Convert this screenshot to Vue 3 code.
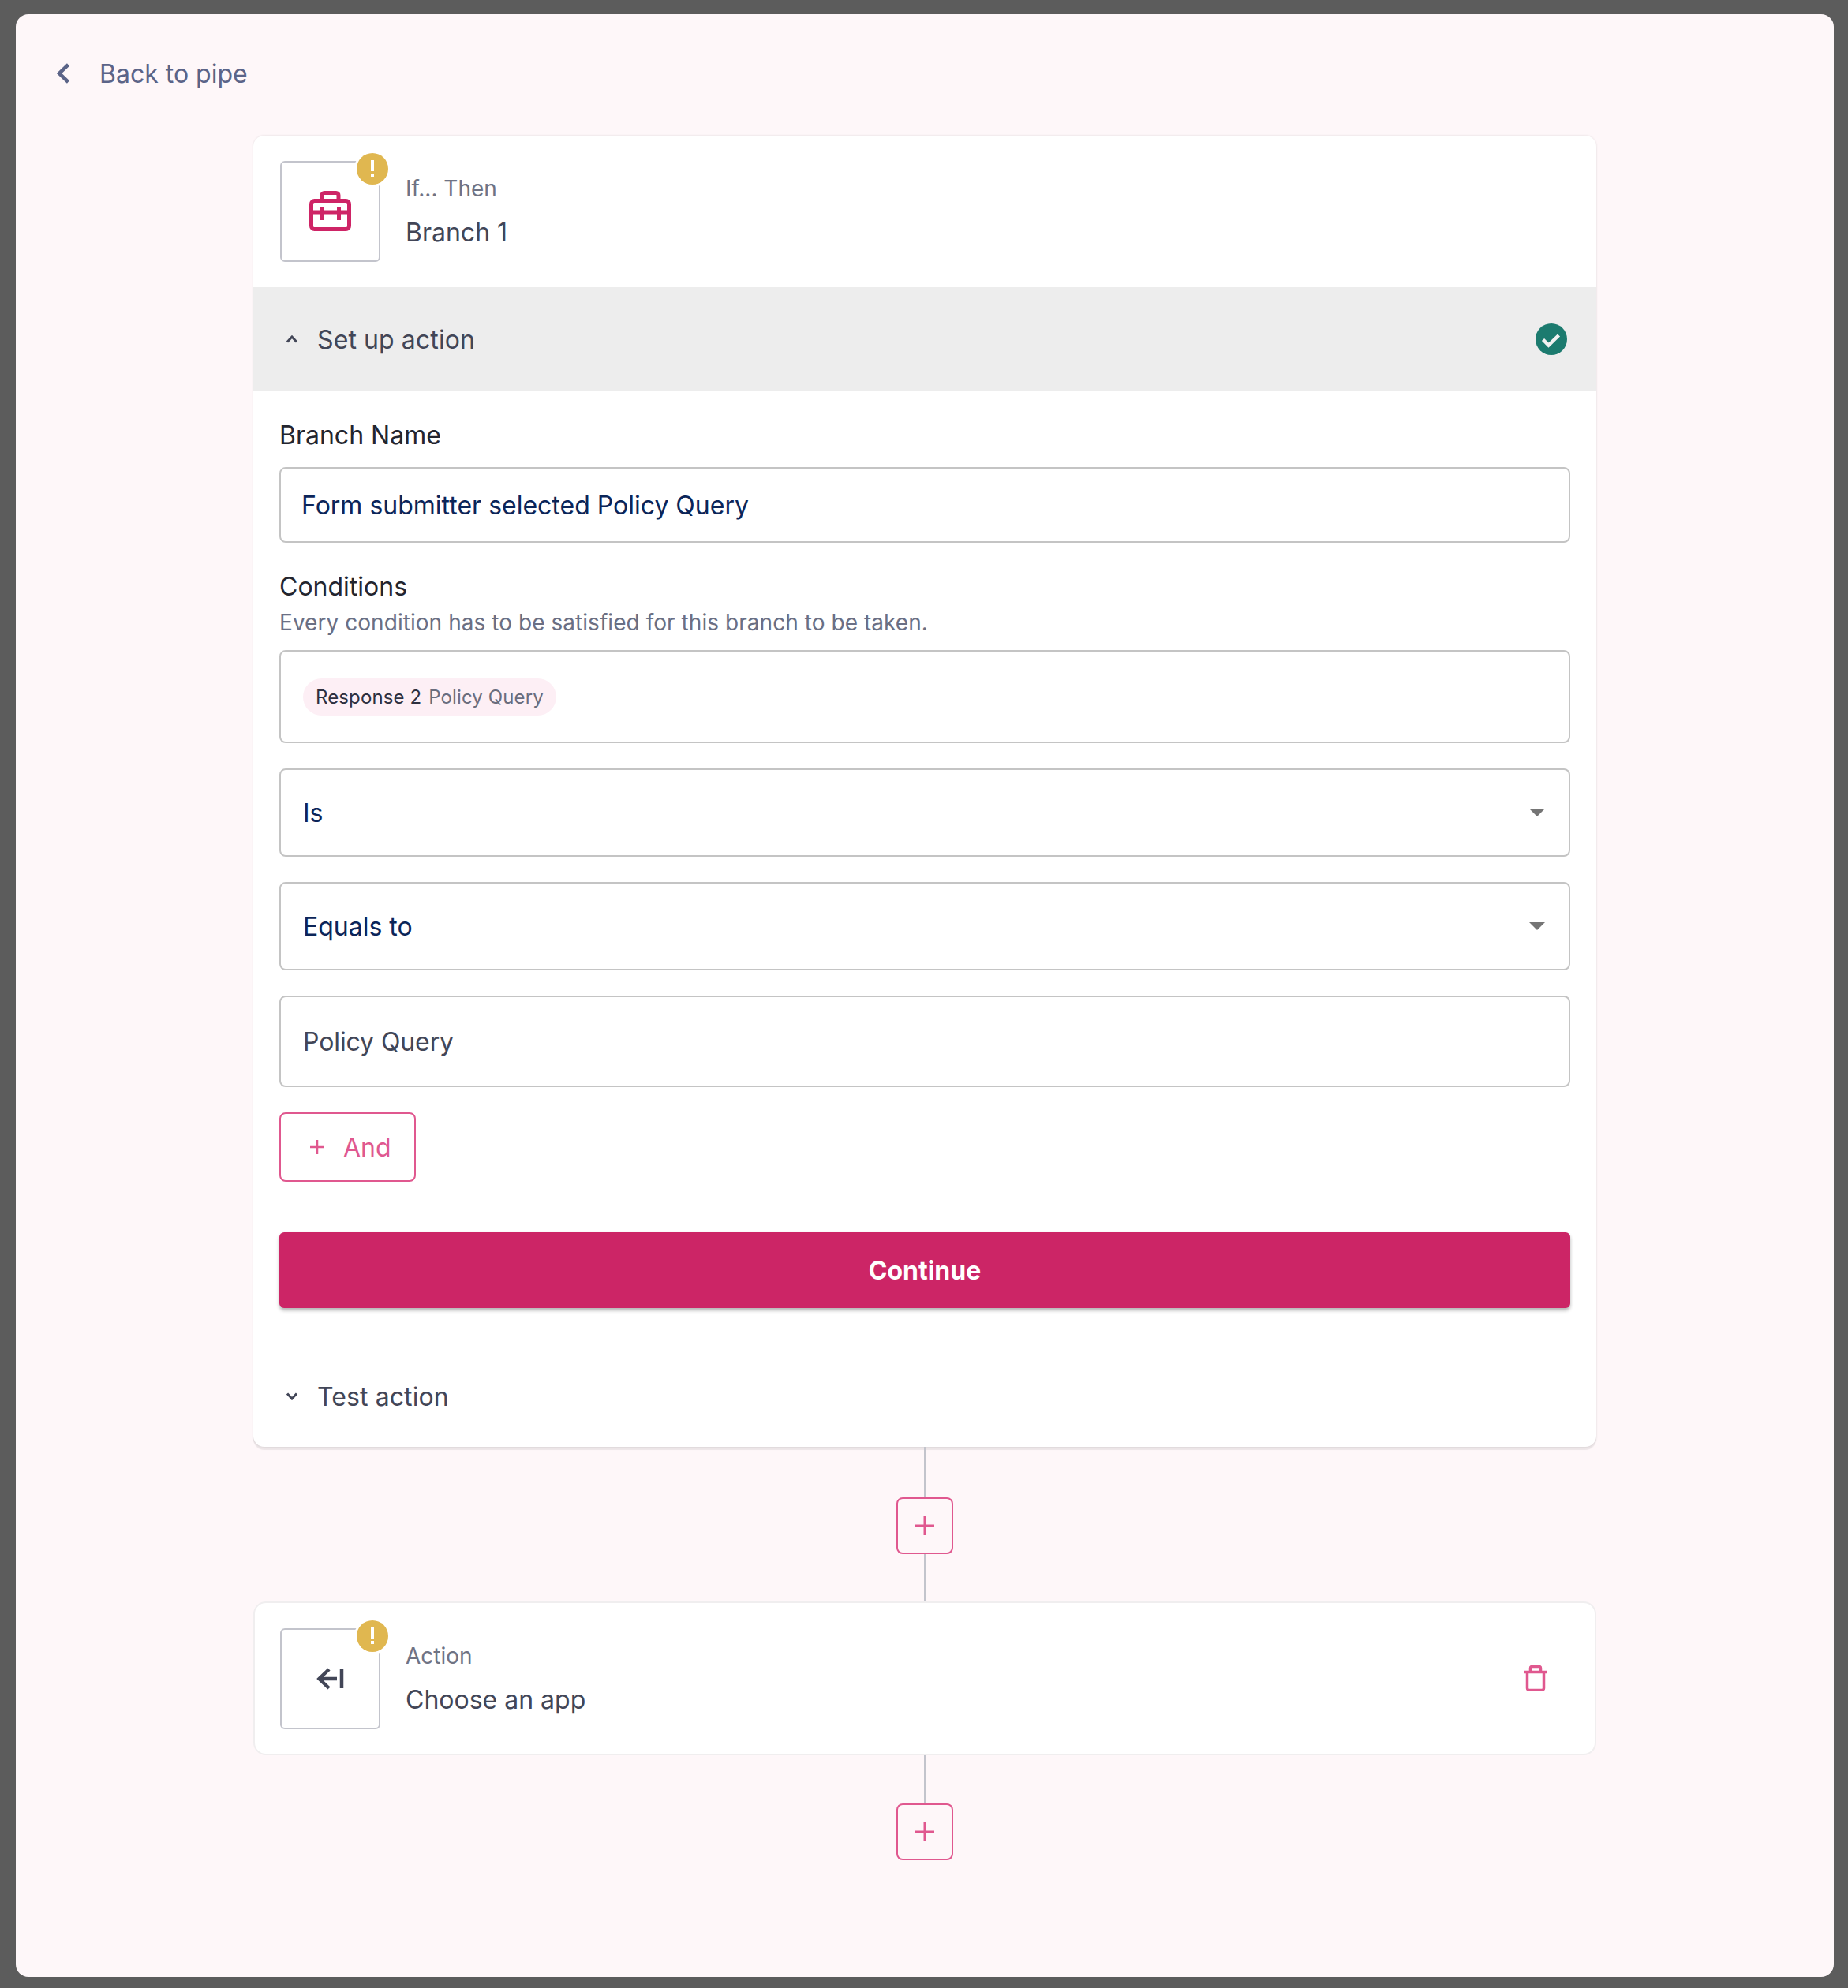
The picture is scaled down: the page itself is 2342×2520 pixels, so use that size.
<template>
  <div class="page">
    <main class="panel">
      <a class="back">
        <svg class="back-icon" width="18" height="26" viewBox="0 0 18 26"><path d="M15.5 2 L4 13 L15.5 24" /></svg>
        <span>Back to pipe</span>
      </a>

      <section class="card">
        <header class="step-head">
          <div class="step-icon">
            <svg width="53" height="51" viewBox="0 0 53 51" class="case">
              <rect x="2.5" y="12.5" width="48" height="36" rx="4" />
              <path d="M16 12V5.5a3 3 0 0 1 3-3h15a3 3 0 0 1 3 3V12" />
              <path d="M2 27H51M16.5 21V37M37.5 21V37" />
            </svg>
            <span class="warn"><i></i><b></b></span>
          </div>
          <div class="step-text">
            <span class="step-kind">If... Then</span>
            <span class="step-name">Branch 1</span>
          </div>
        </header>

        <div class="section-row open">
          <svg class="chev" width="16" height="10" viewBox="0 0 16 10"><path d="M2 8.5 L8 2 L14 8.5" /></svg>
          <span class="section-title">Set up action</span>
          <svg class="ok" width="40" height="40" viewBox="0 0 40 40">
            <circle cx="20" cy="20" r="20" fill="#1c7b6f" />
            <path d="M9.5 20.5 L16.5 27.5 L29.5 15" fill="none" stroke="#f1f1f1" stroke-width="4.5" />
          </svg>
        </div>

        <div class="form">
          <label class="label" for="branch">Branch Name</label>
          <input id="branch" v-model="branchName" class="field text-field" type="text" />

          <h3 class="label cond-title">Conditions</h3>
          <p class="help">Every condition has to be satisfied for this branch to be taken.</p>

          <div class="field chip-field">
            <span class="chip"><em>Response 2</em><span class="chip-name">Policy Query</span></span>
          </div>

          <div v-for="opt in selects" :key="opt" class="field select">
            <span>{{ opt }}</span>
            <svg width="20" height="10" viewBox="0 0 20 10"><path d="M0 0H20L10 10Z" fill="#757575" /></svg>
          </div>

          <input v-model="conditionValue" class="field value-field" type="text" />

          <button type="button" class="and-btn">
            <svg width="20" height="20" viewBox="0 0 20 20"><path d="M10 1V19M1 10H19" /></svg>
            And
          </button>

          <button type="button" class="continue">Continue</button>
        </div>

        <div class="section-row closed">
          <svg class="chev" width="16" height="10" viewBox="0 0 16 10"><path d="M2 1.5 L8 8 L14 1.5" /></svg>
          <span class="section-title">Test action</span>
        </div>
      </section>

      <div class="connector">
        <button type="button" class="add-btn" aria-label="Add step">
          <svg width="24" height="24" viewBox="0 0 24 24"><path d="M12 0V24M0 12H24" /></svg>
        </button>
      </div>

      <section class="card action-card">
        <div class="step-icon">
          <svg class="arrow" width="36" height="28" viewBox="0 0 36 28">
            <path d="M16 2 L3.5 14 L16 26M4 14H26M32 2V26" />
          </svg>
          <span class="warn"><i></i><b></b></span>
        </div>
        <div class="step-text">
          <span class="step-kind">Action</span>
          <span class="step-name">Choose an app</span>
        </div>
        <svg class="trash" width="30" height="33" viewBox="0 0 30 33">
          <path d="M0 8.5H30M4.5 9V29a2.5 2.5 0 0 0 2.5 2.5H23a2.5 2.5 0 0 0 2.5-2.5V9M8.5 8V3.5a2 2 0 0 1 2-2h9a2 2 0 0 1 2 2V8" />
        </svg>
      </section>

      <div class="connector">
        <button type="button" class="add-btn" aria-label="Add step">
          <svg width="24" height="24" viewBox="0 0 24 24"><path d="M12 0V24M0 12H24" /></svg>
        </button>
      </div>
    </main>
  </div>
</template>

<script setup>
import { ref } from 'vue';

const branchName = ref('Form submitter selected Policy Query');
const conditionValue = ref('Policy Query');
const selects = ['Is', 'Equals to'];
</script>

<style>
body {
  background: #5c5c5c;
}
</style>

<style scoped>
.page {
  box-sizing: border-box;
  height: 2520px;
  padding: 18px 18px 14px 20px;
  font-family: Inter, "Liberation Sans", sans-serif;
}

.panel {
  height: 100%;
  background: #fef7f9;
  border-radius: 16px;
  overflow: hidden;
}

.back {
  display: flex;
  align-items: center;
  gap: 37px;
  height: 50px;
  margin: 50px 0 54px 51px;
  color: #5b6488;
  font-size: 32px;
}

.back-icon path {
  fill: none;
  stroke: #5b6488;
  stroke-width: 4.5;
}

.card {
  width: 1702px;
  margin: 0 auto;
  background: #fff;
  border-radius: 14px;
  box-shadow: 0 0 2px 1px rgba(0, 0, 0, 0.06), 0 4px 1px rgba(0, 0, 0, 0.07);
}

.step-head {
  display: flex;
  align-items: center;
  gap: 32px;
  height: 192px;
  padding: 0 34px;
  box-sizing: border-box;
}

.step-icon {
  position: relative;
  flex: none;
  display: flex;
  align-items: center;
  justify-content: center;
  box-sizing: border-box;
  width: 127px;
  height: 128px;
  border: 2px solid #c3c4cc;
  border-radius: 6px;
}

.case {
  margin-top: -2px;
}

.case rect,
.case path {
  fill: none;
  stroke: #ce2466;
  stroke-width: 5;
}

.warn {
  position: absolute;
  top: -12px;
  right: -12px;
  width: 40px;
  height: 40px;
  border-radius: 50%;
  background: #e0b750;
  box-shadow: 0 0 0 3px #fff;
}

.warn i {
  position: absolute;
  left: 18px;
  top: 9px;
  width: 4px;
  height: 14px;
  background: #fff;
}

.warn b {
  position: absolute;
  left: 18px;
  top: 26px;
  width: 4px;
  height: 4px;
  background: #fff;
}

.step-text {
  display: flex;
  flex-direction: column;
  gap: 18px;
}

.step-kind {
  color: #6f7384;
  font-size: 28px;
  line-height: 36px;
}

.step-name {
  color: #424657;
  font-size: 32px;
  line-height: 40px;
}

.section-row {
  display: flex;
  align-items: center;
  height: 132px;
  box-sizing: border-box;
  padding: 0 37px 0 41px;
  color: #424657;
}

.section-row.open {
  background: #ededed;
}

.section-row.closed {
  height: 128px;
  margin-top: 48px;
}

.chev path {
  fill: none;
  stroke: #424657;
  stroke-width: 3;
}

.section-title {
  flex: 1;
  margin-left: 24px;
  font-size: 32px;
  letter-spacing: 0.1px;
}

.form {
  display: flex;
  flex-direction: column;
  padding: 33px 33px 0;
}

.label {
  margin: 0;
  color: #23252f;
  font-size: 32px;
  font-weight: 400;
  line-height: 46px;
}

.field {
  display: flex;
  align-items: center;
  box-sizing: border-box;
  width: 100%;
  margin: 0;
  border: 2px solid #c4c4c4;
  border-radius: 8px;
  background: #fff;
  font-family: inherit;
}

.text-field {
  height: 96px;
  margin-top: 17px;
  padding: 0 26px;
  color: #0b2559;
  font-size: 32px;
  outline: none;
}

.cond-title {
  margin-top: 33px;
}

.help {
  margin: 4px 0 17px;
  color: #6a6f84;
  font-size: 28px;
  line-height: 36px;
  letter-spacing: 0.05px;
}

.chip-field {
  height: 118px;
  padding: 0 28px;
}

.chip {
  padding: 0 16px;
  height: 47px;
  line-height: 47px;
  border-radius: 24px;
  background: #fdeff5;
  color: #6a6d7e;
  font-size: 24px;
  letter-spacing: 0.12px;
}

.chip em {
  color: #2e3040;
  font-style: normal;
}

.chip-name {
  margin-left: 9px;
}

.select {
  justify-content: space-between;
  height: 112px;
  margin-top: 32px;
  padding: 0 30px 0 28px;
  color: #0b2559;
  font-size: 32px;
}

.value-field {
  height: 116px;
  margin-top: 32px;
  padding: 0 28px;
  color: #424657;
  font-size: 32px;
  letter-spacing: -0.1px;
  outline: none;
}

.and-btn {
  display: flex;
  align-items: center;
  gap: 23px;
  align-self: flex-start;
  box-sizing: border-box;
  height: 88px;
  width: 173px;
  margin-top: 32px;
  padding: 0 0 0 36px;
  border: 2px solid #e0588f;
  border-radius: 8px;
  background: #fff;
  color: #e0588f;
  font-family: inherit;
  font-size: 32px;
  font-weight: 400;
}

.and-btn path {
  fill: none;
  stroke: #e0588f;
  stroke-width: 2.5;
}

.continue {
  height: 96px;
  margin-top: 64px;
  border: none;
  border-radius: 6px;
  background: #cc2566;
  box-shadow: 0 3px 4px rgba(0, 0, 0, 0.3);
  color: #fff;
  font-family: inherit;
  font-size: 32px;
  font-weight: 700;
}

.connector {
  display: flex;
  justify-content: center;
  align-items: flex-start;
  width: 2px;
  height: 196px;
  margin: 0 auto;
  background: #c3c4cc;
}

.action-card {
  display: flex;
  align-items: center;
  gap: 32px;
  box-sizing: border-box;
  height: 195px;
  padding: 0 32px;
  border-radius: 16px;
  border: 2px solid #f0eeef;
  box-shadow: none;
}

.connector:last-child {
  height: 61px;
  overflow: visible;
  margin-bottom: 0;
}

.add-btn {
  flex: none;
  display: flex;
  align-items: center;
  justify-content: center;
  box-sizing: border-box;
  width: 72px;
  height: 72px;
  margin-top: 64px;
  padding: 0;
  border: 2px solid #e0588f;
  border-radius: 8px;
  background: #fef7f9;
}

.connector:last-child .add-btn {
  margin-top: 61px;
}

.add-btn path {
  fill: none;
  stroke: #e0588f;
  stroke-width: 3;
}

.arrow path {
  fill: none;
  stroke: #424657;
  stroke-width: 4.5;
}

.trash {
  margin-left: auto;
  margin-right: 28px;
}

.trash path {
  fill: none;
  stroke: #e0588f;
  stroke-width: 3.5;
}
</style>
